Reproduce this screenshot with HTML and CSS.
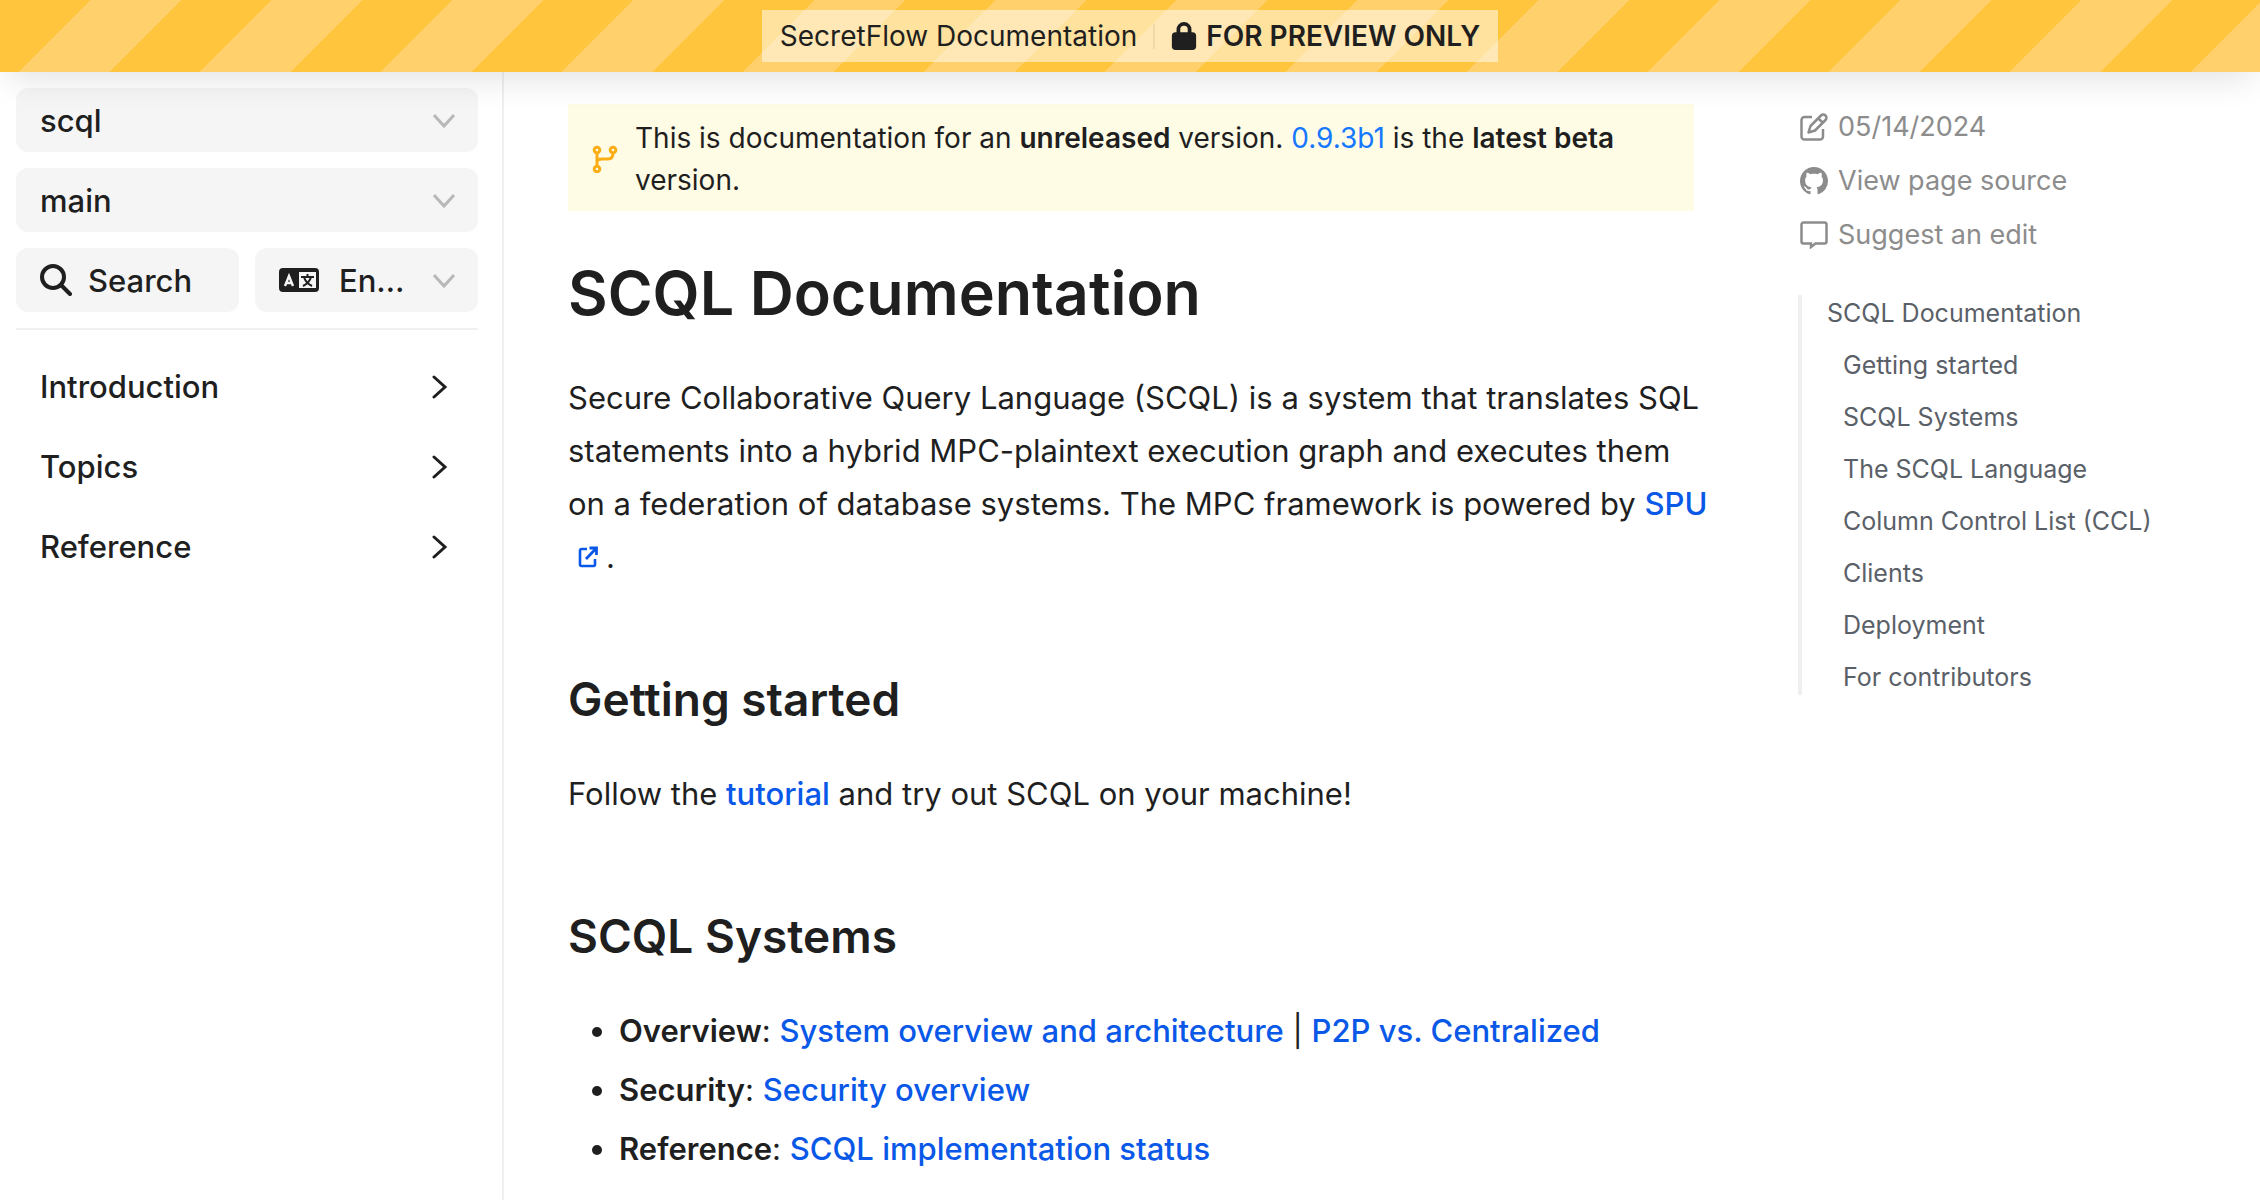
FILE: index.html
```html
<!DOCTYPE html>
<html lang="en">
<head>
<meta charset="utf-8">
<meta name="viewport" content="width=device-width, initial-scale=1">
<title>SCQL Documentation</title>
<link rel="stylesheet" href="styles.css">
</head>
<body>
<header class="banner">
  <div class="banner-label">
    <span class="banner-site">SecretFlow Documentation</span>
    <span class="banner-divider"></span>
    <svg class="banner-lock" viewBox="0 0 26 30" aria-hidden="true"><path d="M7 13V8a6 6 0 0 1 12 0v5" fill="none" stroke="currentColor" stroke-width="4"/><rect x="0" y="11" width="26" height="19" rx="4" fill="currentColor"/></svg>
    <strong class="banner-note">FOR PREVIEW ONLY</strong>
  </div>
</header>
<div class="layout">
  <aside class="sidebar">
    <div class="controls">
      <div class="select">
        <select class="control" aria-label="Project"><option>scql</option></select>
        <svg class="select-arrow" viewBox="0 0 22 14" aria-hidden="true"><path d="M1 1l10 11L21 1"/></svg>
      </div>
      <div class="select">
        <select class="control" aria-label="Version"><option>main</option></select>
        <svg class="select-arrow" viewBox="0 0 22 14" aria-hidden="true"><path d="M1 1l10 11L21 1"/></svg>
      </div>
      <div class="control-row">
        <button class="control search" type="button">
          <svg class="search-icon" viewBox="0 0 32 32" aria-hidden="true"><circle cx="13" cy="13" r="11"/><path d="M21 21l9 9"/></svg>
          <span>Search</span>
        </button>
        <div class="select language">
          <svg class="language-icon" viewBox="0 0 40 24" aria-hidden="true"><rect width="40" height="24" rx="4" fill="#1f1f1f"/><rect x="20" y="4" width="17" height="16" fill="#f5f5f5"/><path d="M6 18l4-10 4 10M7 15h6" fill="none" stroke="#f5f5f5" stroke-width="2.4"/><path d="M22 9h13M28.500 6v3M32 9c-1 4-4 7-8 9M25 9c1 4 4 7 8 9" fill="none" stroke="#1f1f1f" stroke-width="2"/></svg>
          <select class="control language-control" aria-label="Language"><option>English (US)</option></select>
          <svg class="select-arrow" viewBox="0 0 22 14" aria-hidden="true"><path d="M1 1l10 11L21 1"/></svg>
        </div>
      </div>
    </div>
    <nav class="menu" aria-label="Sections">
      <a class="menu-item" href="#introduction">Introduction<svg class="menu-arrow" viewBox="0 0 16 24" aria-hidden="true"><path d="M2 2l11 10L2 22"/></svg></a>
      <a class="menu-item" href="#topics">Topics<svg class="menu-arrow" viewBox="0 0 16 24" aria-hidden="true"><path d="M2 2l11 10L2 22"/></svg></a>
      <a class="menu-item" href="#reference">Reference<svg class="menu-arrow" viewBox="0 0 16 24" aria-hidden="true"><path d="M2 2l11 10L2 22"/></svg></a>
    </nav>
  </aside>
  <main class="content">
    <div class="alert">
      <svg class="alert-icon" viewBox="0 0 26 28" aria-hidden="true"><g fill="none" stroke="currentColor" stroke-width="3"><circle cx="5" cy="5" r="2.800"/><circle cx="21" cy="5" r="2.800"/><circle cx="5" cy="24" r="2.800"/><path d="M5 8v13M5 17c0-2 2-3 5-3h6c3 0 5-2 5-6"/></g></svg>
      <p class="alert-text">This is documentation for an <strong>unreleased</strong> version. <a href="#latest">0.9.3b1</a> is the <strong>latest beta</strong> version.</p>
    </div>
    <h1 id="scql-documentation">SCQL Documentation</h1>
    <p>Secure Collaborative Query Language (SCQL) is a system that translates SQL statements into a hybrid MPC-plaintext execution graph and executes them on a federation of database systems. The MPC framework is powered by <a href="#spu">SPU <svg class="external-icon" viewBox="0 0 20 22" aria-hidden="true"><path d="M9 3H3.500a1.500 1.500 0 0 0-1.500 1.500v14a1.500 1.500 0 0 0 1.500 1.500h12a1.500 1.500 0 0 0 1.500-1.500V13" fill="none" stroke="currentColor" stroke-width="2.600"/><path d="M8 13L18 2.500M11.500 2H18.500v7" fill="none" stroke="currentColor" stroke-width="2.800"/></svg></a>.</p>
    <h2 id="getting-started">Getting started</h2>
    <p>Follow the <a href="#tutorial">tutorial</a> and try out SCQL on your machine!</p>
    <h2 id="scql-systems">SCQL Systems</h2>
    <ul class="list">
      <li><strong>Overview</strong>: <a href="#overview">System overview and architecture</a> | <a href="#p2p">P2P vs. Centralized</a></li>
      <li><strong>Security</strong>: <a href="#security">Security overview</a></li>
      <li><strong>Reference</strong>: <a href="#status">SCQL implementation status</a></li>
    </ul>
  </main>
  <aside class="aside">
    <div class="meta">
      <span class="meta-item"><svg class="meta-icon" viewBox="0 0 28 28" aria-hidden="true"><g fill="none" stroke="currentColor" stroke-width="2.500" stroke-linejoin="round"><path d="M12 4H4.500a3 3 0 0 0-3 3v16.500a3 3 0 0 0 3 3H20a3 3 0 0 0 3-3V16"/><path d="M8.500 19.500l2-6.500L21 2.500a3 3 0 0 1 4.500 4.500L15 17.500zM18.500 5.500l4.500 4.500"/></g></svg>05/14/2024</span>
      <a class="meta-item" href="#source"><svg class="meta-icon" viewBox="0 0 16 16" aria-hidden="true"><path fill="currentColor" d="M8 0C3.58 0 0 3.58 0 8c0 3.54 2.29 6.53 5.47 7.59.4.07.55-.17.55-.38 0-.19-.01-.82-.01-1.49-2.01.37-2.53-.49-2.69-.94-.09-.23-.48-.94-.82-1.13-.28-.15-.68-.52-.01-.53.63-.01 1.08.58 1.23.82.72 1.21 1.87.87 2.33.66.07-.52.28-.87.51-1.07-1.78-.2-3.64-.89-3.64-3.95 0-.87.31-1.59.82-2.15-.08-.2-.36-1.02.08-2.12 0 0 .67-.21 2.2.82.64-.18 1.32-.27 2-.27s1.36.09 2 .27c1.53-1.04 2.2-.82 2.2-.82.44 1.1.16 1.92.08 2.12.51.56.82 1.27.82 2.15 0 3.07-1.87 3.75-3.65 3.95.29.25.54.73.54 1.48 0 1.07-.01 1.93-.01 2.2 0 .21.15.46.55.38A8.01 8.01 0 0 0 16 8c0-4.42-3.58-8-8-8z"/></svg>View page source</a>
      <a class="meta-item" href="#edit"><svg class="meta-icon" viewBox="0 0 28 28" aria-hidden="true"><path d="M3.500 1.500h21a2 2 0 0 1 2 2v17a2 2 0 0 1-2 2H15.500l-4.500 3.500v-3.500H3.500a2 2 0 0 1-2-2v-17a2 2 0 0 1 2-2z" fill="none" stroke="currentColor" stroke-width="2.500"/></svg>Suggest an edit</a>
    </div>
    <nav class="toc" aria-label="On this page">
      <a class="toc-top" href="#scql-documentation">SCQL Documentation</a>
      <a href="#getting-started">Getting started</a>
      <a href="#scql-systems">SCQL Systems</a>
      <a href="#language">The SCQL Language</a>
      <a href="#ccl">Column Control List (CCL)</a>
      <a href="#clients">Clients</a>
      <a href="#deployment">Deployment</a>
      <a href="#contributors">For contributors</a>
    </nav>
  </aside>
</div>
</body>
</html>
```
FILE: styles.css
```css
* { box-sizing: border-box; }

html { height: 100%; }

body {
  display: flex;
  flex-direction: column;
  height: 100%;
  margin: 0;
  overflow: hidden;
  background: #fff;
  color: #1f1f1f;
  font: 31px/53px Inter, "Liberation Sans", sans-serif;
}

a { color: #0958e8; text-decoration: none; }
p, h1, h2, ul { margin: 0; }
strong { font-weight: 600; }
svg { flex: none; }

.banner {
  position: relative;
  z-index: 1;
  display: flex;
  flex: none;
  justify-content: center;
  padding: 10px 0;
  background: repeating-linear-gradient(135deg, #ffc53d 0 64px, #ffd06b 64px 128px);
  box-shadow: 0 16px 32px -8px rgba(0, 0, 0, .11);
}

.banner-label {
  display: flex;
  align-items: center;
  height: 52px;
  padding: 0 18px;
  background: rgba(255, 255, 255, .5);
  font-size: 28px;
  line-height: 52px;
}

.banner-divider { width: 2px; height: 25px; margin: 0 16px; background: rgba(0, 0, 0, .06); }
.banner-lock { width: 26px; height: 28px; margin-right: 9px; }

.layout {
  display: grid;
  flex: 1;
  grid-template-columns: 504px minmax(0, 1fr) 462px;
  min-height: 0;
}

.sidebar { padding: 16px 24px 0 16px; border-right: 2px solid #f0f0f0; }

.controls {
  display: flex;
  flex-direction: column;
  gap: 16px;
  padding-bottom: 16px;
  border-bottom: 2px solid #f0f0f0;
}

.control-row { display: grid; grid-template-columns: 1fr 1fr; gap: 16px; }

.control {
  width: 100%;
  height: 64px;
  margin: 0;
  padding: 0 24px;
  border: 0;
  border-radius: 12px;
  background: #f5f5f5;
  color: inherit;
  font: inherit;
  font-weight: 500;
  appearance: none;
}

.select { position: relative; display: flex; }
.select-arrow { position: absolute; top: 26px; right: 23px; width: 22px; height: 14px; pointer-events: none; }
.select-arrow path { fill: none; stroke: #b8b8b8; stroke-width: 3; }

.search { display: flex; align-items: center; gap: 16px; }
.search-icon { width: 32px; height: 32px; fill: none; stroke: currentColor; stroke-width: 4; stroke-linecap: round; }
.language-icon { position: absolute; top: 20px; left: 24px; width: 40px; height: 24px; }
.language-control { padding: 0 72px 0 84px; text-overflow: ellipsis; }

.menu { display: flex; flex-direction: column; padding-top: 17px; }

.menu-item {
  display: flex;
  align-items: center;
  justify-content: space-between;
  padding: 0 30px 0 24px;
  color: inherit;
  font-weight: 500;
  line-height: 80px;
}

.menu-arrow { width: 16px; height: 24px; fill: none; stroke: currentColor; stroke-width: 3; stroke-linecap: round; }

.content { padding: 32px 90px 0 64px; }
.content p a, .list a { font-weight: 500; }

.alert {
  display: flex;
  align-items: center;
  gap: 17px;
  margin-right: 14px;
  padding: 13px 24px 10px;
  background: #fffce6;
}

.alert-icon { width: 26px; height: 28px; color: #faad14; }
.content .alert-text { font-size: 28px; line-height: 42px; }
.content .alert-text a { color: #1677ff; font-weight: 400; }

h1 { margin: 42px 0 38px; font-size: 61px; font-weight: 600; line-height: 80px; }
h2 { margin: 87px 0 39px; font-size: 46px; font-weight: 600; line-height: 58px; }

.external-icon { width: 20px; height: 22px; margin: 0 8px 0 10px; }

.list { display: flex; flex-direction: column; gap: 6px; padding-left: 51px; }

.aside { padding-top: 28px; }
.meta { display: flex; flex-direction: column; align-items: flex-start; padding-left: 2px; }

.meta-item {
  display: flex;
  align-items: center;
  gap: 10px;
  color: #8c8c8c;
  font-size: 27px;
  line-height: 54px;
}

.meta-icon { width: 28px; height: 28px; }

.toc {
  display: flex;
  flex-direction: column;
  gap: 16px;
  margin-top: 33px;
  border-left: 4px solid #f0f0f0;
  font-size: 25px;
  line-height: 36px;
}

.toc a { padding-left: 41px; color: #5a6068; }
.toc .toc-top { padding-left: 25px; }
```
